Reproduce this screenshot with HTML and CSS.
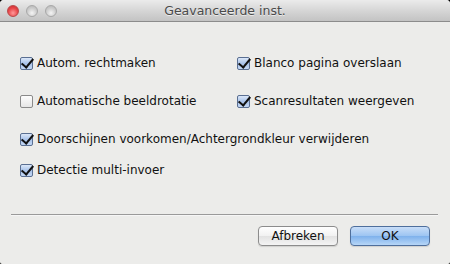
FILE: index.html
```html
<!DOCTYPE html>
<html lang="nl">
<head>
  <meta charset="UTF-8" />
  <title>Geavanceerde inst.</title>
  <link rel="stylesheet" href="styles.css">
</head>
<body>
  <div class="window">
    <div class="titlebar">
      <div class="lights">
        <span class="light close"></span>
        <span class="light"></span>
        <span class="light"></span>
      </div>
      <div class="title">Geavanceerde inst.</div>
    </div>

    <div class="content">
      <div class="options">
        <label class="option"><span class="box checked"></span>Autom. rechtmaken</label>
        <label class="option"><span class="box checked"></span>Blanco pagina overslaan</label>
        <label class="option"><span class="box"></span>Automatische beeldrotatie</label>
        <label class="option"><span class="box checked"></span>Scanresultaten weergeven</label>
        <label class="option wide"><span class="box checked"></span>Doorschijnen voorkomen/Achtergrondkleur verwijderen</label>
        <label class="option wide last"><span class="box checked"></span>Detectie multi-invoer</label>
      </div>

      <div class="separator"></div>

      <div class="buttons">
        <button type="button" class="btn">Afbreken</button>
        <button type="button" class="btn default">OK</button>
      </div>
    </div>
  </div>
</body>
</html>
```

FILE: styles.css
```css
html {
  background: #000;
}
body {
  margin: 0;
  font-family: "DejaVu Sans", Verdana, sans-serif;
  font-size: 12px;
  color: #111;
}
.window {
  height: 264px;
  background: #ececea;
  border-radius: 4px 4px 2px 2px;
  overflow: hidden;
  display: flex;
  flex-direction: column;
}
.titlebar {
  height: 21px;
  border-bottom: 1px solid #8c8c8c;
  background: linear-gradient(#ebebeb, #d4d4d4 55%, #c3c3c3);
  display: flex;
  align-items: center;
  position: relative;
}
.lights {
  display: flex;
  gap: 7px;
  padding-left: 7px;
}
.light {
  width: 12px;
  height: 12px;
  border-radius: 50%;
  box-sizing: border-box;
  border: 1px solid #a8a8a8;
  background: radial-gradient(circle at 50% 70%, #f4f4f4, #c9c9c9 60%, #b4b4b4);
}
.light.close {
  border-color: #b84a4a;
  background: radial-gradient(circle at 50% 70%, #ff9a9a, #e8474a 55%, #c8262a);
}
.title {
  position: absolute;
  left: 0;
  right: 0;
  top: 3px;
  text-align: center;
  font-size: 12.5px;
  color: #4a4a4a;
  text-shadow: 0 1px 0 rgba(255, 255, 255, 0.6);
}
.content {
  flex: 1;
  padding: 34px 12px 0 11px;
}
.options {
  display: grid;
  grid-template-columns: 217px 1fr;
  row-gap: 24px;
  padding-left: 9px;
}
.option {
  display: flex;
  align-items: center;
  height: 14px;
  white-space: nowrap;
}
.option.wide {
  grid-column: 1 / 3;
}
.option.last {
  margin-top: -7px;
}
.box {
  width: 13px;
  height: 13px;
  box-sizing: border-box;
  border: 1px solid #8a8a8a;
  border-radius: 2px;
  margin-right: 4px;
  background: linear-gradient(#fdfdfd, #e6e6e6);
  position: relative;
}
.box.checked {
  border-color: #5a6f92;
  background: linear-gradient(#dbe7f8, #a9c3ea 50%, #c4d8f5);
}
.box.checked::after {
  content: "";
  position: absolute;
  left: 3px;
  top: -2px;
  width: 5px;
  height: 10px;
  border: solid #111;
  border-width: 0 2.5px 2.5px 0;
  transform: rotate(40deg);
}
.separator {
  margin-top: 37px;
  height: 1px;
  background: #9a9a9a;
  border-bottom: 1px solid #f6f6f6;
}
.buttons {
  display: flex;
  justify-content: flex-end;
  gap: 12px;
  margin-top: 10px;
  padding-right: 8px;
}
.btn {
  width: 80px;
  height: 20px;
  padding: 0;
  font-family: "DejaVu Sans", Verdana, sans-serif;
  font-size: 12px;
  color: #111;
  border: 1px solid #8c8c8c;
  border-radius: 4px;
  background: linear-gradient(#ffffff, #f1f1f1 50%, #e2e2e2 51%, #f4f4f4);
  box-shadow: 0 1px 1px rgba(0, 0, 0, 0.12);
}
.btn.default {
  border-color: #4f6f9c;
  background: linear-gradient(#c9def8, #9cc4f2 50%, #7eb1ec 51%, #b7d6f7);
}
```
